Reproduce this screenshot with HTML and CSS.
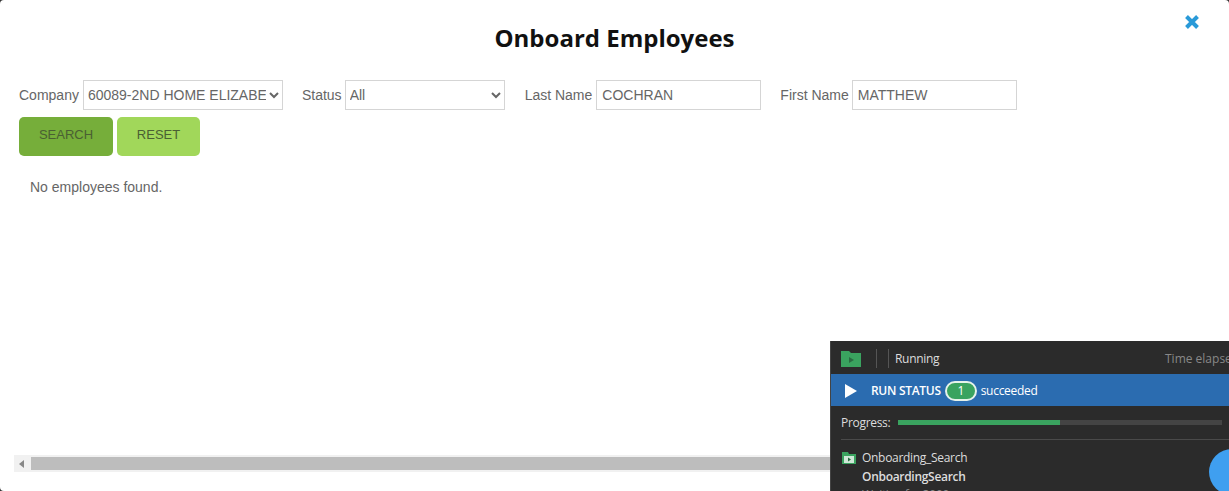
FILE: index.html
```html
<!DOCTYPE html>
<html lang="en">
<head>
  <meta charset="UTF-8">
  <title>Onboard Employees</title>
  <link rel="stylesheet" href="styles.css">
</head>
<body>
  <div class="modal">
    <a class="close-btn" href="#" aria-label="Close">
      <svg width="16" height="16" viewBox="0 0 16 16"><path d="M2.5 2.5 13.5 13.5M13.5 2.5 2.5 13.5" stroke="#2a9ad8" stroke-width="4" fill="none"/></svg>
    </a>
    <h1 class="modal-title">Onboard Employees</h1>

    <form class="filters">
      <div class="filter-row">
        <label class="filter filter-company">Company
          <select class="field field-company">
            <option>60089-2ND HOME ELIZABETH</option>
          </select>
        </label>
        <label class="filter filter-status">Status
          <select class="field field-status">
            <option>All</option>
          </select>
        </label>
        <label class="filter filter-last">Last Name
          <input class="field field-name" type="text" value="COCHRAN">
        </label>
        <label class="filter filter-first">First Name
          <input class="field field-name" type="text" value="MATTHEW">
        </label>
      </div>
      <div class="button-row">
        <button class="btn btn-search" type="button">SEARCH</button>
        <button class="btn btn-reset" type="button">RESET</button>
      </div>
    </form>

    <p class="empty-msg">No employees found.</p>

    <div class="hscroll">
      <span class="hscroll-arrow"></span>
      <span class="hscroll-thumb"></span>
    </div>
  </div>

  <!-- run status panel sits over the modal -->
  <aside class="run-panel">
    <div class="run-head">
      <svg class="run-folder" width="20" height="16" viewBox="0 0 20 16"><path d="M0 0h8l2 2h10v14H0z" fill="#3aa35f"/><path d="M8 6l5 3-5 3z" fill="#2b6b43"/></svg>
      <span class="run-sep"></span>
      <span class="run-sep run-sep-two"></span>
      <span class="run-label">Running</span>
      <span class="run-time">Time elapsed</span>
    </div>
    <div class="run-status">
      <svg class="run-play" width="12" height="14" viewBox="0 0 12 14"><path d="M0 0 12 7 0 14z" fill="#fff"/></svg>
      <strong class="run-status-title">RUN STATUS</strong>
      <span class="run-badge">1</span>
      <span>succeeded</span>
    </div>
    <div class="run-progress">
      <span>Progress:</span>
      <div class="progress-track"><div class="progress-fill" style="width: 50%"></div></div>
    </div>
    <div class="run-item">
      <div class="run-item-name">
        <svg width="14" height="12" viewBox="0 0 14 12"><path d="M0 0h6l1 2h7v10H0z" fill="#3aa35f"/><rect x="2" y="4" width="10" height="7" fill="#cfe8d8"/><path d="M6 5.5l3 2-3 2z" fill="#2b6b43"/></svg>
        <span>Onboarding_Search</span>
      </div>
      <div class="run-item-title">OnboardingSearch</div>
      <div class="run-item-wait">Waiting for 3000</div>
    </div>
    <span class="run-fab"></span>
  </aside>
</body>
</html>
```

FILE: styles.css
```css
html, body {
  margin: 0;
  height: 100%;
  overflow: hidden;
}
body {
  background: #333;
  color: #666;
  font: 14px/20px "Liberation Sans", Arial, sans-serif;
}
.modal {
  height: 491px;
  box-sizing: border-box;
  padding: 0 19px;
  display: flex;
  flex-direction: column;
  background: #fff;
  border-radius: 4px;
}
.modal-title {
  margin: 0;
  padding-top: 21px;
  height: 59px;
  box-sizing: border-box;
  text-align: center;
  color: #111;
  font: 700 24px/34px "Open Sans", sans-serif;
}
.close-btn {
  position: absolute;
  top: 14px;
  left: 1184px;
  line-height: 0;
}
.filters {
  margin-top: 21px;
}
.filter-row {
  display: flex;
  height: 30px;
}
.filter {
  display: flex;
  align-items: center;
  gap: 4px;
}
.filter-status { margin-left: 19px; gap: 3px; }
.filter-last { margin-left: 20px; }
.filter-first { margin-left: 19px; gap: 3px; }
.field {
  box-sizing: border-box;
  height: 30px;
  background: #fff;
  border: 1px solid #d5d5d5;
  border-radius: 0;
  color: #666;
  font: 14px "Liberation Sans", Arial, sans-serif;
  outline: none;
}
select.field { padding: 0; }
input.field { padding: 0 5px; }
.field-company { width: 200px; }
.field-status { width: 160px; }
.field-name { width: 165px; }
.button-row {
  display: flex;
  gap: 4px;
  margin-top: 7px;
}
.btn {
  height: 39px;
  padding: 0 0 4px;
  border: 0;
  border-radius: 5px;
  color: #4a5f33;
  font: 13px "Liberation Sans", Arial, sans-serif;
}
.btn-search {
  width: 94px;
  background: #76ae3a;
}
.btn-reset {
  width: 83px;
  background: #a1d75a;
}
.empty-msg {
  margin: 21px 0 0 11px;
}
.hscroll {
  margin: auto 0 19px -5px;
  height: 17px;
  background: #f1f1f1;
  display: flex;
  align-items: center;
}
.hscroll-arrow {
  width: 0;
  height: 0;
  margin: 0 5px;
  border: 4px solid transparent;
  border-left-width: 0;
  border-right: 5px solid #888;
}
.hscroll-thumb {
  flex: 1;
  height: 13px;
  margin-left: 2px;
  background: #bdbdbd;
}

.run-panel {
  position: absolute;
  left: 830px;
  top: 341px;
  width: 420px;
  height: 150px;
  overflow: hidden;
  background: #2b2b2b;
  color: #ddd;
  font: 12px/16px "Open Sans", sans-serif;
  letter-spacing: -0.3px;
  border-left: 1px solid #444;
  box-sizing: border-box;
}
.run-head {
  display: flex;
  align-items: center;
  height: 33px;
  padding-top: 2px;
  box-sizing: border-box;
}
.run-folder { margin-left: 10px; }
.run-sep {
  width: 1px;
  height: 19px;
  margin-left: 15px;
  background: #555;
}
.run-sep-two { margin-left: 11px; }
.run-label { margin-left: 6px; }
.run-time {
  position: absolute;
  left: 334px;
  color: #888;
  letter-spacing: 0;
}
.run-status {
  display: flex;
  align-items: center;
  gap: 4px;
  height: 32px;
  padding-top: 1px;
  box-sizing: border-box;
  background: #2b6cb0;
  color: #fff;
}
.run-play { margin: 0 10px 0 14px; }
.run-status-title { font-weight: 600; }
.run-badge {
  box-sizing: border-box;
  width: 32px;
  height: 20px;
  line-height: 16px;
  text-align: center;
  background: #3aa35f;
  border: 2px solid #e6f2ea;
  border-radius: 10px;
}
.run-progress {
  display: flex;
  align-items: center;
  gap: 8px;
  height: 34px;
  box-sizing: border-box;
  margin: 0 7px 0 10px;
  border-bottom: 1px solid #4a4a4a;
}
.progress-track {
  width: 324px;
  height: 5px;
  background: #444;
}
.progress-fill {
  height: 100%;
  background: #3aa35f;
}
.run-item {
  padding: 10px 0 0 11px;
}
.run-item-name {
  display: flex;
  align-items: center;
  gap: 6px;
}
.run-item-title {
  margin: 3px 0 0 20px;
  font-weight: 600;
}
.run-item-wait {
  margin: 2px 0 0 20px;
  color: #888;
}
.run-fab {
  position: absolute;
  left: 378px;
  top: 108px;
  width: 46px;
  height: 46px;
  border-radius: 50%;
  background: #3f9ff0;
}
```
